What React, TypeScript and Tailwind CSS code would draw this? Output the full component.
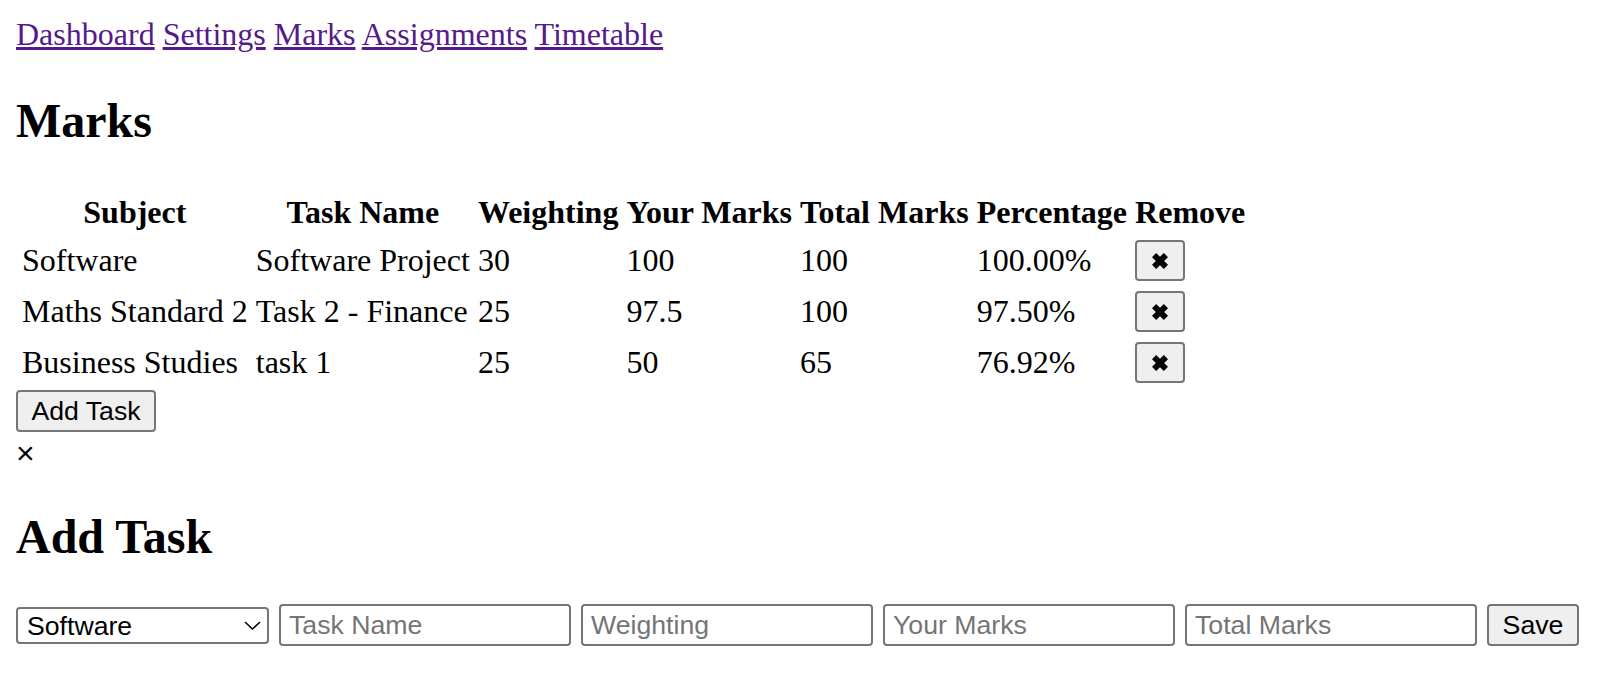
import React from 'react'

interface Mark {
  subject: string
  task: string
  weighting: string
  yours: string
  total: string
  percentage: string
}

const marks: Mark[] = [
  { subject: 'Software', task: 'Software Project', weighting: '30', yours: '100', total: '100', percentage: '100.00%' },
  { subject: 'Maths Standard 2', task: 'Task 2 - Finance', weighting: '25', yours: '97.5', total: '100', percentage: '97.50%' },
  { subject: 'Business Studies', task: 'task 1', weighting: '25', yours: '50', total: '65', percentage: '76.92%' },
]

const links = ['Dashboard', 'Settings', 'Marks', 'Assignments', 'Timetable']

const headers = ['Subject', 'Task Name', 'Weighting', 'Your Marks', 'Total Marks', 'Percentage', 'Remove']

const inputClass =
  "h-[42px] w-[292px] rounded-[4px] border-2 border-[#767676] bg-white px-[8px] font-['Liberation_Sans',Arial,sans-serif] text-[26.67px] leading-[normal] text-black placeholder:text-[#757575] outline-none"

const buttonClass =
  "rounded-[4px] border-2 border-[#767676] bg-[#efefef] font-['Liberation_Sans',Arial,sans-serif] text-[26.67px] leading-[normal] text-black"

function HeavyX() {
  return (
    <svg width="16" height="16" viewBox="0 0 15 15" aria-hidden="true">
      <path
        d="M0 3.9 L3.9 0 L7.5 3.6 L11.1 0 L15 3.9 L11.4 7.5 L15 11.1 L11.1 15 L7.5 11.4 L3.9 15 L0 11.1 L3.6 7.5 Z"
        fill="black"
      />
    </svg>
  )
}

export default function App() {
  return (
    <div className="m-4 font-['Liberation_Serif','Times_New_Roman',serif] text-[32px] leading-[normal] text-black">
      {/* nav */}
      <div>
        {links.map((l, i) => (
          <React.Fragment key={l}>
            <a href="#" className="text-[#551a8b] underline">
              {l}
            </a>
            {i < links.length - 1 && ' '}
          </React.Fragment>
        ))}
      </div>

      <h1 className="my-[40px] text-[48px] font-bold leading-[normal]">Marks</h1>

      <table className="border-separate border-spacing-[4px]">
        <thead>
          <tr>
            {headers.map((h) => (
              <th key={h} className="p-[2px] text-center font-bold">
                {h}
              </th>
            ))}
          </tr>
        </thead>
        <tbody>
          {marks.map((m) => (
            <tr key={m.subject}>
              <td className="p-[2px] align-middle">{m.subject}</td>
              <td className="p-[2px] align-middle">{m.task}</td>
              <td className="p-[2px] align-middle">{m.weighting}</td>
              <td className="p-[2px] align-middle">{m.yours}</td>
              <td className="p-[2px] align-middle">{m.total}</td>
              <td className="p-[2px] align-middle">{m.percentage}</td>
              <td className="p-[2px] align-middle">
                <button className={`${buttonClass} my-[1px] flex h-[41px] w-[50px] items-center justify-center`}>
                  <HeavyX />
                </button>
              </td>
            </tr>
          ))}
        </tbody>
      </table>

      <button className={`${buttonClass} block h-[42px] w-[140px]`}>Add Task</button>

      {/* close */}
      <div className="h-[37px] pt-[3px] font-['Liberation_Sans',Arial,sans-serif] text-[32px] leading-[37px]">×</div>

      <h2 className="my-[40px] text-[48px] font-bold leading-[normal]">Add Task</h2>

      <div className="flex items-center gap-[10px]">
        <div className="relative">
          <select className="h-[37px] w-[253px] appearance-none rounded-[4px] border-2 border-[#767676] bg-white pl-[9px] font-['Liberation_Sans',Arial,sans-serif] text-[26.67px] leading-[normal] text-black outline-none">
            <option>Software</option>
            <option>Maths Standard 2</option>
            <option>Business Studies</option>
          </select>
          <svg
            className="pointer-events-none absolute right-[8px] top-[15px]"
            width="17"
            height="9"
            viewBox="0 0 17 9"
            aria-hidden="true"
          >
            <path d="M1 1 L8.5 8 L16 1" fill="none" stroke="black" strokeWidth="1.5" />
          </svg>
        </div>
        <input className={inputClass} placeholder="Task Name" />
        <input className={inputClass} placeholder="Weighting" />
        <input className={inputClass} placeholder="Your Marks" />
        <input className={inputClass} placeholder="Total Marks" />
        <button className={`${buttonClass} h-[42px] w-[92px]`}>Save</button>
      </div>
    </div>
  )
}
